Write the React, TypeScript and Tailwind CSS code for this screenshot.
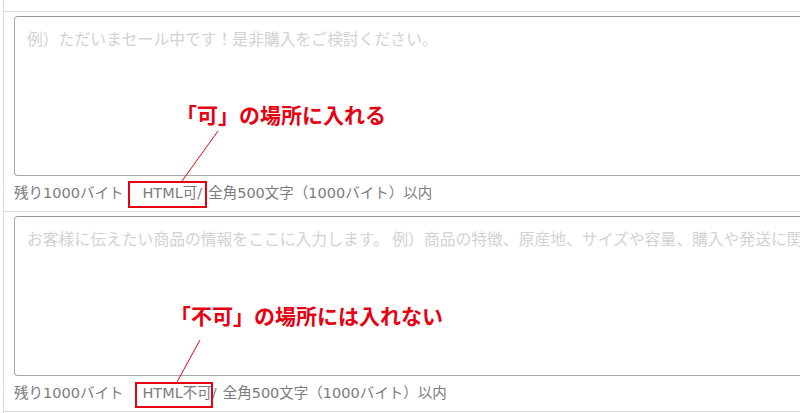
const uiFont = "font-['DejaVu_Sans','Noto_Sans_CJK_JP',sans-serif]"

type FieldProps = {
  placeholder: string
  htmlNote: string
  last?: boolean
}

function Field({ placeholder, htmlNote, last }: FieldProps) {
  return (
    <div className={`border-t border-[#dcdcdc] pl-[10px] pt-[4px] pb-[8px] ${last ? "border-b" : ""}`}>
      <textarea
        readOnly
        placeholder={placeholder}
        className="block w-[830px] h-[160px] resize-none rounded-[4px] border border-[#a8a8a8] border-t-[#959595] bg-white px-[12px] py-[10px] text-[15.8px] leading-[24px] text-[#333] placeholder:text-[#d2d2d2] font-['Noto_Sans_CJK_JP',sans-serif] outline-none whitespace-nowrap overflow-hidden"
      />
      <div className={`mt-[7px] h-[20px] flex items-center text-[14.5px] leading-[20px] text-[#7b7b7b] whitespace-nowrap ${uiFont}`}>
        <span>残り1000バイト</span>
        <span className="ml-[19px]">{htmlNote}/</span>
        <span className="ml-[6px]">全角500文字（1000バイト）以内</span>
      </div>
    </div>
  )
}

export default function App() {
  return (
    <div className="relative w-[800px] h-[413px] overflow-hidden bg-white">
      <div className="ml-[3px] h-full border-l border-[#dcdcdc]">
        <div className="h-[11px]" />
        <Field
          placeholder="例）ただいまセール中です！是非購入をご検討ください。"
          htmlNote="HTML可"
        />
        <Field
          placeholder="お客様に伝えたい商品の情報をここに入力します。 例）商品の特徴、原産地、サイズや容量、購入や発送に関する注意事項など"
          htmlNote="HTML不可"
          last
        />
      </div>

      {/* annotations */}
      <p className="absolute left-[176px] top-[101px] text-[21px] leading-[26px] font-bold text-[#e60012] whitespace-nowrap font-['Noto_Sans_CJK_JP',sans-serif]">
        「可」の場所に入れる
      </p>
      <p className="absolute left-[170px] top-[302px] text-[21px] leading-[26px] font-bold text-[#e60012] whitespace-nowrap font-['Noto_Sans_CJK_JP',sans-serif]">
        「不可」の場所には入れない
      </p>
      <div className="absolute left-[128px] top-[181px] w-[79px] h-[27px] border-2 border-[#e60012]" />
      <div className="absolute left-[135px] top-[382px] w-[78px] h-[26px] border-2 border-[#e60012]" />
      <svg className="absolute inset-0 pointer-events-none" width="800" height="413">
        <line x1="218" y1="131" x2="182" y2="181" stroke="#e60012" strokeWidth="1" />
        <line x1="200" y1="340" x2="177" y2="382" stroke="#e60012" strokeWidth="1" />
      </svg>
    </div>
  )
}
